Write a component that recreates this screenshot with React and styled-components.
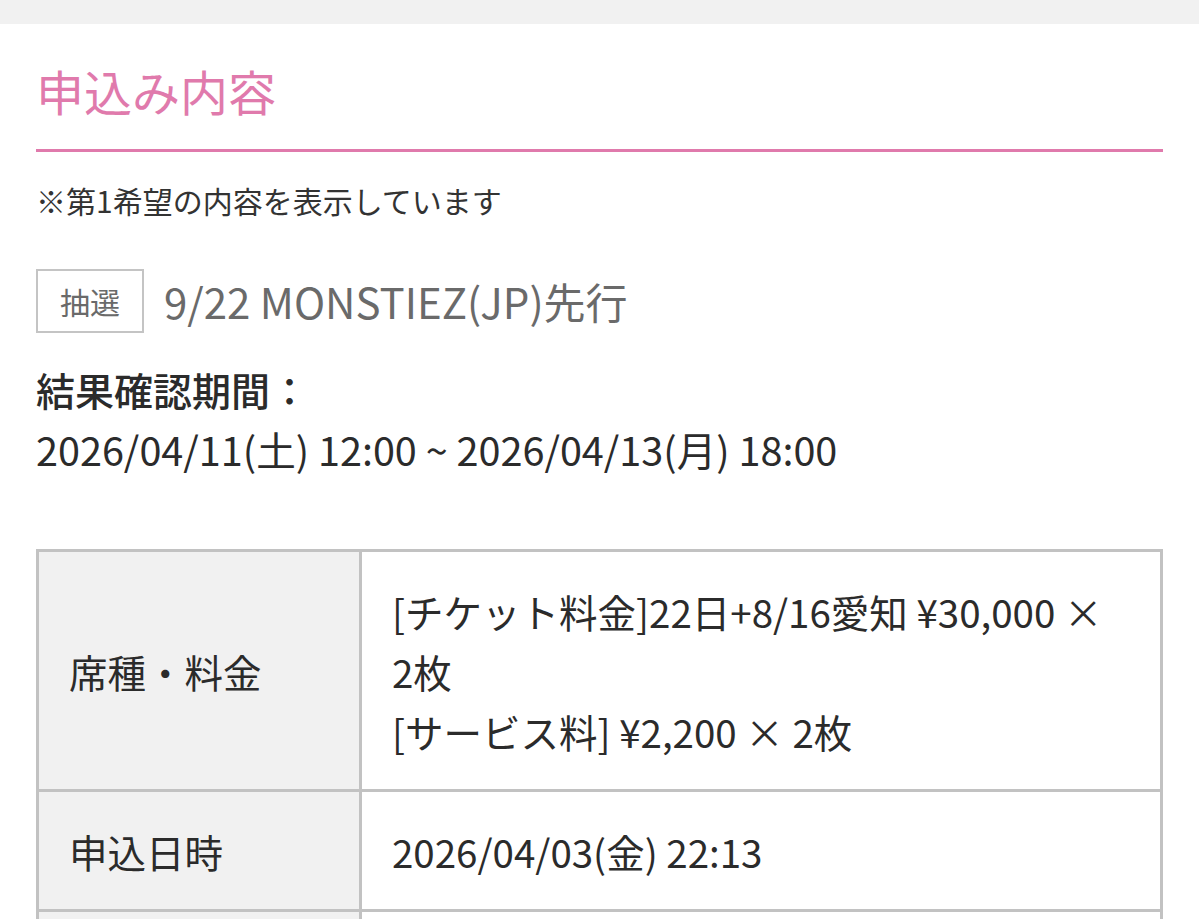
import React from "react";
import styled, { createGlobalStyle } from "styled-components";

const GlobalStyle = createGlobalStyle`
  html, body {
    margin: 0;
    padding: 0;
    background: #ffffff;
  }
  body {
    font-family: "Noto Sans CJK JP", "Noto Sans", sans-serif;
    color: #2b2b2b;
  }
`;

const TopBand = styled.div`
  height: 24px;
  background: #f1f1f1;
`;

const Content = styled.main`
  padding: 37px 36px 40px;
`;

const SectionTitle = styled.h2`
  margin: 0;
  padding-bottom: 30px;
  border-bottom: 3px solid #e07aac;
  color: #e07aac;
  font-size: 48px;
  line-height: 58px;
  font-weight: 400;
  letter-spacing: 0;
`;

const Note = styled.p`
  margin: 26px 0 0;
  font-size: 30px;
  line-height: 45px;
  color: #333333;
`;

const EventRow = styled.div`
  display: flex;
  align-items: center;
  gap: 20px;
  margin-top: 46px;
`;

const Badge = styled.span`
  display: inline-block;
  padding: 8px 22px;
  border: 2px solid #c4c4c4;
  color: #6a6a6a;
  font-size: 30px;
  line-height: 44px;
`;

const EventName = styled.span`
  color: #6a6a6a;
  font-size: 42px;
  line-height: 54px;
`;

const Period = styled.div`
  margin-top: 26px;
  line-height: 60px;
`;

const PeriodLabel = styled.div`
  font-size: 39px;
  font-weight: 500;
`;

const PeriodValue = styled.div`
  font-size: 39.6px;
  font-weight: 400;
`;

const DetailTable = styled.table`
  width: 100%;
  margin-top: 70px;
  border-collapse: separate;
  border-spacing: 0;
  border-top: 3px solid #c2c2c2;
  border-left: 3px solid #c2c2c2;
  font-size: 38.5px;
  line-height: 60px;
`;

const HeadCell = styled.th`
  box-sizing: border-box;
  width: 323px;
  padding: 29px 30px 28px;
  background: #f1f1f1;
  border-right: 3px solid #c2c2c2;
  border-bottom: 3px solid #c2c2c2;
  text-align: left;
  vertical-align: middle;
  font-weight: 400;
  color: #2b2b2b;
`;

const DataCell = styled.td`
  padding: 29px 30px 28px;
  border-right: 3px solid #c2c2c2;
  border-bottom: 3px solid #c2c2c2;
  vertical-align: middle;
  color: #2b2b2b;
`;

const rows = [
  {
    label: "席種・料金",
    lines: [
      "[チケット料金]22日+8/16愛知 ¥30,000 × 2枚",
      "[サービス料] ¥2,200 × 2枚",
    ],
  },
  { label: "申込日時", lines: ["2026/04/03(金) 22:13"] },
  { label: "", lines: [] },
];

export default function App() {
  return (
    <>
      <GlobalStyle />
      <TopBand />
      <Content>
        <SectionTitle>申込み内容</SectionTitle>
        <Note>※第1希望の内容を表示しています</Note>
        <EventRow>
          <Badge>抽選</Badge>
          <EventName>9/22 MONSTIEZ(JP)先行</EventName>
        </EventRow>
        <Period>
          <PeriodLabel>結果確認期間：</PeriodLabel>
          <PeriodValue>2026/04/11(土) 12:00 ~ 2026/04/13(月) 18:00</PeriodValue>
        </Period>
        <DetailTable>
          <tbody>
            {rows.map((row, i) => (
              <tr key={i}>
                <HeadCell>{row.label}</HeadCell>
                <DataCell>
                  {row.lines.map((line) => (
                    <div key={line}>{line}</div>
                  ))}
                </DataCell>
              </tr>
            ))}
          </tbody>
        </DetailTable>
      </Content>
    </>
  );
}
